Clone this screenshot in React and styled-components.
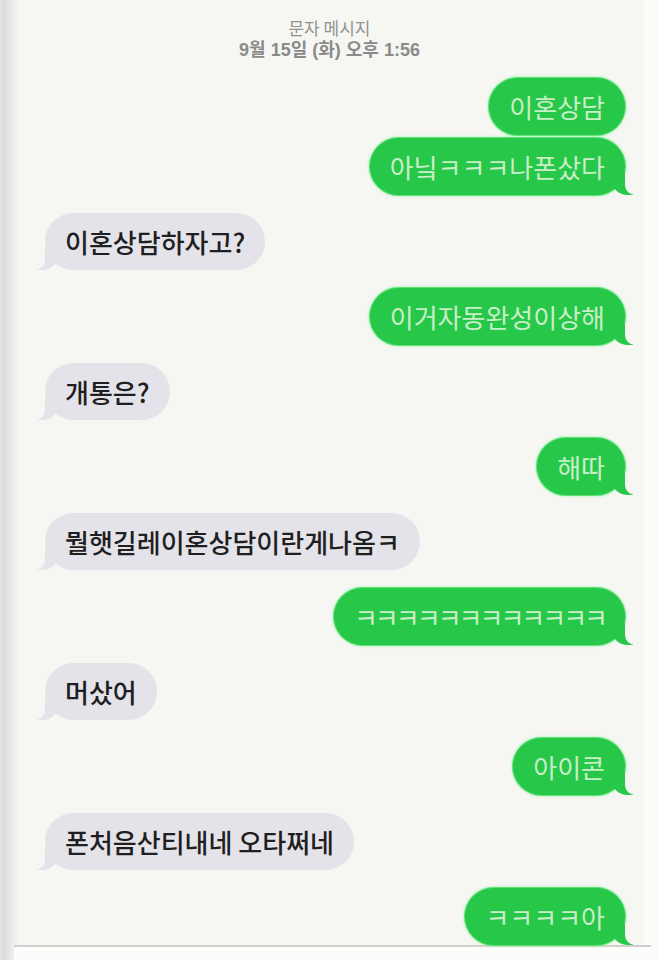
import styled, { createGlobalStyle } from "styled-components";

const PAGE_BG = "#f6f7f3";

const GlobalStyle = createGlobalStyle`
  body {
    margin: 0;
    background: ${PAGE_BG};
    font-family: "Noto Sans CJK KR", "Noto Sans", sans-serif;
  }
`;

const Screen = styled.div`
  width: 659px;
  height: 960px;
  overflow: hidden;
  display: flex;
  flex-direction: column;
  background: linear-gradient(
    to right,
    #e4e4e4 0,
    #dadada 4px,
    #ececec 12px,
    ${PAGE_BG} 20px,
    ${PAGE_BG} 643px,
    #fbfbfa 646px
  );
`;

const Header = styled.div`
  padding-top: 17px;
  text-align: center;
`;

const Title = styled.div`
  font-size: 17px;
  line-height: 22px;
  color: #929292;
`;

const Stamp = styled.div`
  font-family: "Liberation Sans", "Noto Sans CJK KR", sans-serif;
  font-size: 18px;
  font-weight: 600;
  line-height: 22px;
  color: #8a8a8a;
`;

const Thread = styled.div`
  display: flex;
  flex-direction: column;
  padding: 17px 34px 0 45px;
`;

const Row = styled.div`
  display: flex;
  justify-content: ${(p) => (p.$me ? "flex-end" : "flex-start")};
  margin-top: ${(p) => (p.$first ? 0 : p.$cont ? 3 : 18)}px;
`;

const Bubble = styled.div`
  position: relative;
  z-index: 0;
  height: 57px;
  box-sizing: border-box;
  padding: 0 20px;
  display: flex;
  align-items: center;
  border-radius: 28.5px;
  font-size: 26px;
  line-height: 30px;
  white-space: nowrap;
  letter-spacing: ${(p) => p.$spacing || 0}px;
  background: ${(p) => (p.$me ? "#27c74a" : "#e4e3e9")};
  color: ${(p) => (p.$me ? "#c9efc6" : "#1f1f22")};
  font-weight: ${(p) => (p.$me ? 400 : 500)};
  box-shadow: ${(p) =>
    p.$me ? "0 0 0 1px #5fe079, 0 0 3px 1px #9af2aa" : "none"};

  &::before,
  &::after {
    content: "";
    display: ${(p) => (p.$tail ? "block" : "none")};
    position: absolute;
    bottom: 0;
    height: 22px;
    z-index: -1;
  }
  &::before {
    width: 21px;
    background: ${(p) => (p.$me ? "#27c74a" : "#e4e3e9")};
    ${(p) =>
      p.$me
        ? "right: -8px; border-bottom-left-radius: 16px 14px;"
        : "left: -8px; border-bottom-right-radius: 16px 14px;"}
  }
  &::after {
    width: 16px;
    background: ${PAGE_BG};
    ${(p) =>
      p.$me
        ? "right: -16px; border-bottom-left-radius: 10px;"
        : "left: -16px; border-bottom-right-radius: 10px;"}
  }
`;

const Footer = styled.div`
  flex: 1;
  margin: 0 8px 0 14px;
  border-top: 2px solid #cfd0cd;
  background: #fcfcfb;
`;

const messages = [
  { me: true, text: "이혼상담", tail: false },
  { me: true, text: "아닠ㅋㅋㅋ나폰샀다", tail: true, cont: true },
  { me: false, text: "이혼상담하자고?", tail: true },
  { me: true, text: "이거자동완성이상해", tail: true },
  { me: false, text: "개통은?", tail: true },
  { me: true, text: "해따", tail: true },
  { me: false, text: "뭘햇길레이혼상담이란게나옴ㅋ", tail: true },
  { me: true, text: "ㅋㅋㅋㅋㅋㅋㅋㅋㅋㅋㅋㅋ", tail: true, spacing: -3 },
  { me: false, text: "머샀어", tail: true },
  { me: true, text: "아이콘", tail: true },
  { me: false, text: "폰처음산티내네 오타쩌네", tail: true },
  { me: true, text: "ㅋㅋㅋㅋ아", tail: true },
];

export default function App() {
  return (
    <>
      <GlobalStyle />
      <Screen>
        <Header>
          <Title>문자 메시지</Title>
          <Stamp>9월 15일 (화) 오후 1:56</Stamp>
        </Header>
        <Thread>
          {messages.map((m, i) => (
            <Row key={i} $me={m.me} $cont={m.cont} $first={i === 0}>
              <Bubble $me={m.me} $tail={m.tail} $spacing={m.spacing}>
                {m.text}
              </Bubble>
            </Row>
          ))}
        </Thread>
        <Footer />
      </Screen>
    </>
  );
}
